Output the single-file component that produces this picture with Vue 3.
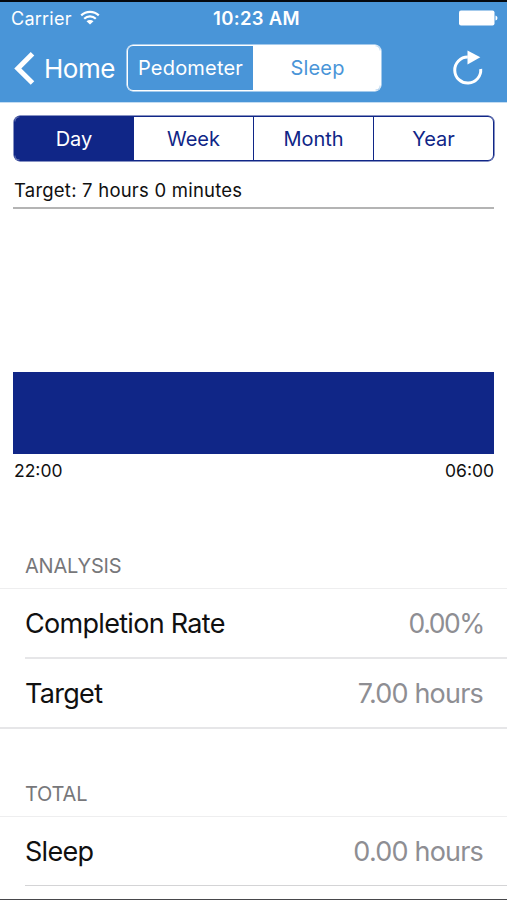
<script setup>
import { ref } from 'vue'

const modes = ['Pedometer', 'Sleep']
const activeMode = ref('Sleep')

const ranges = ['Day', 'Week', 'Month', 'Year']
const activeRange = ref('Day')

const sections = [
  {
    title: 'ANALYSIS',
    rows: [
      { label: 'Completion Rate', value: '0.00%', name: 'rate' },
      { label: 'Target', value: '7.00 hours', name: 'target' },
    ],
  },
  {
    title: 'TOTAL',
    rows: [{ label: 'Sleep', value: '0.00 hours', name: 'sleep' }],
  },
]
</script>

<template>
  <div class="screen">
    <header class="top">
      <div class="status-bar">
        <div class="carrier">
          <span class="carrier-name">Carrier</span>
          <svg class="wifi" viewBox="0 0 20 15" width="20" height="15">
            <path d="M1.2 5.4a12.6 12.6 0 0 1 17.6 0" />
            <path d="M4.2 8.7a8.3 8.3 0 0 1 11.6 0" />
            <path class="dot" d="M10 14.6L6.5 11.3a5.1 5.1 0 0 1 7 0z" />
          </svg>
        </div>
        <span class="time">10:23 AM</span>
        <svg class="battery" viewBox="0 0 39 16" width="39" height="16">
          <rect x="0" y="0.5" width="35.5" height="15" rx="2" />
          <path d="M36.5 5.5q2 .5 2 2.5t-2 2.5z" />
        </svg>
      </div>

      <nav class="nav-bar">
        <button class="back">
          <svg viewBox="0 0 22 34" width="22" height="34">
            <path d="M19.5 2.7L4.8 17.4l14.7 14.7" />
          </svg>
          <span>Home</span>
        </button>
        <div class="modes">
          <button
            v-for="mode in modes"
            :key="mode"
            :class="{ active: mode === activeMode }"
            @click="activeMode = mode"
          >
            {{ mode }}
          </button>
        </div>
        <button class="refresh">
          <svg viewBox="0 0 30 36" width="30" height="36">
            <path class="ring" d="M14.8 7.1A13 13 0 1 0 27.7 19" />
            <path class="arrow" d="M14.5 0.6L27.3 7.3L14.5 14.6z" />
          </svg>
        </button>
      </nav>
    </header>

    <main>
      <div class="ranges">
        <button
          v-for="range in ranges"
          :key="range"
          :class="{ active: range === activeRange }"
          @click="activeRange = range"
        >
          {{ range }}
        </button>
      </div>

      <section class="chart">
        <div class="goal">Target: 7 hours 0 minutes</div>
        <div class="plot">
          <div class="bar"></div>
        </div>
        <div class="axis">
          <span>22:00</span>
          <span>06:00</span>
        </div>
      </section>

      <section v-for="section in sections" :key="section.title" class="group">
        <h2>{{ section.title }}</h2>
        <ul>
          <li v-for="row in section.rows" :key="row.name">
            <span>{{ row.label }}</span>
            <span class="value" :class="row.name">{{ row.value }}</span>
          </li>
        </ul>
      </section>
    </main>
  </div>
</template>

<style>
body {
  margin: 0;
  overflow: hidden;
}
</style>

<style scoped>
.screen {
  box-sizing: border-box;
  width: 507px;
  height: 900px;
  overflow: hidden;
  border-top: 2px solid #05090f;
  border-bottom: 1px solid #48484b;
  background: #fff;
  color: #101010;
  font-family: Inter, 'Liberation Sans', sans-serif;
}

button {
  margin: 0;
  padding: 0;
  border: 0;
  background: none;
  color: inherit;
  font: inherit;
  letter-spacing: inherit;
  cursor: pointer;
}

.top {
  height: 100px;
  border-bottom: 1px solid #c3dcf2;
  background: #4995d8;
  color: #fff;
}

.status-bar {
  display: grid;
  grid-template-columns: 1fr auto 1fr;
  align-items: center;
  height: 33px;
  padding: 0 9px 0 11px;
  font-size: 18px;
}

.carrier {
  display: flex;
  align-items: center;
  gap: 8px;
}

.carrier-name {
  letter-spacing: 0.25px;
}

.wifi {
  margin-bottom: 3px;
  fill: none;
  stroke: #fff;
  stroke-width: 2.2;
}

.wifi .dot {
  fill: #fff;
  stroke: none;
}

.time {
  padding-left: 4px;
  font-size: 18.5px;
  font-weight: 600;
  letter-spacing: 0.3px;
  line-height: 20px;
  padding-bottom: 2px;
}

.battery {
  justify-self: end;
  margin-bottom: 1px;
  fill: #fff;
}

.nav-bar {
  display: flex;
  align-items: center;
  height: 66px;
  padding: 0 24px 0 13px;
}

.back {
  display: flex;
  align-items: center;
  width: 114px;
  gap: 9px;
  font-size: 26px;
  letter-spacing: -0.5px;
}

.back svg {
  flex: none;
  fill: none;
  stroke: #fff;
  stroke-width: 5;
}

.modes {
  box-sizing: border-box;
  display: grid;
  grid-template-columns: 125px 1fr;
  width: 254px;
  height: 46px;
  overflow: hidden;
  border: 1px solid #fff;
  border-radius: 6px;
  box-shadow: 0 0 0 0.5px #fff;
  font-size: 20px;
  letter-spacing: 0.2px;
}

.modes .active {
  padding-left: 2px;
  background: #fff;
  color: #4995d8;
}

.refresh {
  height: 36px;
  margin-left: auto;
  padding-bottom: 2px;
}

.refresh svg {
  display: block;
}

.ring {
  fill: none;
  stroke: #fff;
  stroke-width: 3;
}

.arrow {
  fill: #fff;
}

.ranges {
  box-sizing: border-box;
  display: grid;
  grid-template-columns: 118px 120px 120px 1fr;
  height: 45px;
  margin: 13px 13px 0 14px;
  overflow: hidden;
  border: 1px solid #102687;
  border-radius: 6px;
  box-shadow: 0 0 0 0.5px #102687;
  color: #102687;
  font-size: 20px;
}

.ranges button + button {
  border-left: 1.5px solid #102687;
}

.ranges .active {
  background: #102687;
  color: #fff;
}

.chart {
  margin: 0 13px;
}

.goal {
  box-sizing: border-box;
  height: 48px;
  padding: 17px 0 0 1px;
  border-bottom: 2px solid #b4b4b4;
  font-size: 18.5px;
  letter-spacing: 0.22px;
  line-height: 24px;
}

.plot {
  display: flex;
  flex-direction: column;
  justify-content: flex-end;
  height: 245px;
}

.bar {
  height: 82px;
  background: #102687;
}

.axis {
  display: flex;
  justify-content: space-between;
  height: 34px;
  padding-left: 1px;
  font-size: 17.5px;
  line-height: 34px;
}

.group {
  padding-top: 55px;
}

.chart + .group {
  padding-top: 68px;
}

.group h2 {
  box-sizing: border-box;
  height: 32px;
  margin: 0;
  padding-left: 25px;
  color: #77777a;
  font-size: 20px;
  font-weight: 400;
  letter-spacing: -0.2px;
  line-height: 1;
}

.group ul {
  margin: 0;
  padding: 0;
  border-top: 1px solid #eeeeef;
  border-bottom: 2px solid #e6e6e8;
  list-style: none;
}

.group:last-child ul {
  border-bottom: 0;
}

.group:last-child li {
  border-bottom: 1px solid #d4d4d6;
}

.group li {
  display: flex;
  align-items: center;
  justify-content: space-between;
  height: 68px;
  margin-left: 25px;
  padding-right: 24px;
  font-size: 27px;
  letter-spacing: -0.7px;
}

.group li + li {
  border-top: 2px solid #e6e6e8;
}

.value {
  color: #8e8e93;
  letter-spacing: -0.8px;
}

.value.rate {
  margin-right: -1px;
  font-size: 26.5px;
  letter-spacing: -1.4px;
}
</style>
